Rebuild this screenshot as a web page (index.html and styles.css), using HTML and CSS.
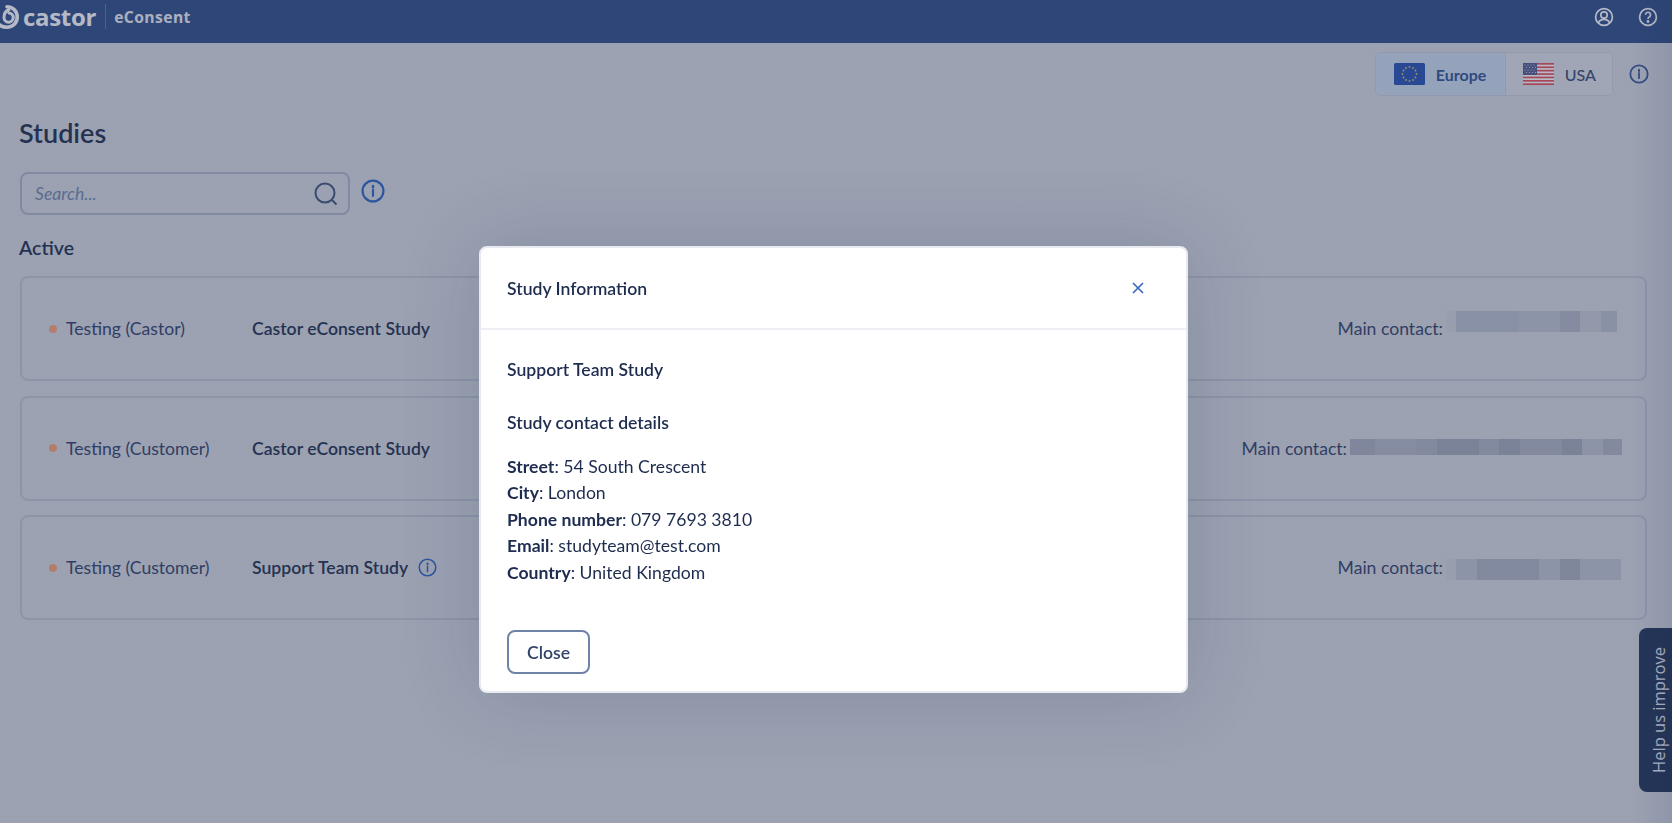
FILE: index.html
```html
<!DOCTYPE html>
<html lang="en">
<head>
    <meta charset="UTF-8">
    <title>Studies - Castor eConsent</title>
    <link rel="stylesheet" href="styles.css">
</head>
<body>
    <header class="topbar">
        <div class="brand">
            <svg class="brand-mark" viewBox="0 0 24 24" width="24" height="24" fill="none" stroke="currentColor" stroke-width="3.600" stroke-linecap="round">
                <path d="M12 1.800C18 1.800 22.200 6.500 22.200 12C22.200 18 18 22.200 12 22.200C8 22.200 4 20.500 2 17"/>
                <path d="M14 4.500C10.500 6 9 9.500 9 12.500A4.600 4.600 0 1 0 14 8" stroke-width="3"/>
            </svg>
            <span class="brand-name">castor</span>
            <span class="brand-line"></span>
            <span class="brand-product">eConsent</span>
        </div>
        <div class="topbar-icons">
            <svg viewBox="0 0 20 20" width="20" height="20" fill="none" stroke="currentColor" stroke-width="1.700">
                <circle cx="10" cy="10" r="8.400"/>
                <circle cx="10" cy="8" r="3.200"/>
                <path d="M4.600 15.600c1-2.400 3-3.200 5.400-3.200s4.400.8 5.400 3.200"/>
            </svg>
            <svg viewBox="0 0 20 20" width="20" height="20" fill="none" stroke="currentColor" stroke-width="1.700">
                <circle cx="10" cy="10" r="8.400"/>
                <path d="M7.500 7.800a2.500 2.500 0 1 1 3.800 2.100c-.9.600-1.300 1-1.300 2"/>
                <circle cx="10" cy="14.500" r=".6" fill="currentColor"/>
            </svg>
        </div>
    </header>

    <main class="content">
        <div class="region-row">
            <div class="region-switch">
                <div class="region region-active">
                    <svg class="flag" viewBox="0 0 31 22" width="31" height="22">
                        <rect width="31" height="22" rx="1.500" fill="#395eb8"/>
                        <g fill="#d3cb64">
                            <circle cx="15.500" cy="4" r=".9"/>
                            <circle cx="19" cy="5" r=".9"/>
                            <circle cx="21.500" cy="7.500" r=".9"/>
                            <circle cx="22.500" cy="11" r=".9"/>
                            <circle cx="21.500" cy="14.500" r=".9"/>
                            <circle cx="19" cy="17" r=".9"/>
                            <circle cx="15.500" cy="18" r=".9"/>
                            <circle cx="12" cy="17" r=".9"/>
                            <circle cx="9.500" cy="14.500" r=".9"/>
                            <circle cx="8.500" cy="11" r=".9"/>
                            <circle cx="9.500" cy="7.500" r=".9"/>
                            <circle cx="12" cy="5" r=".9"/>
                        </g>
                    </svg>
                    <span>Europe</span>
                </div>
                <div class="region region-other">
                    <svg class="flag" viewBox="0 0 31 22" width="31" height="22">
                        <rect width="31" height="22" rx="1.500" fill="#fff"/>
                        <g fill="#f05964">
                            <rect width="31" height="1.700"/>
                            <rect y="3.400" width="31" height="1.700"/>
                            <rect y="6.800" width="31" height="1.700"/>
                            <rect y="10.200" width="31" height="1.700"/>
                            <rect y="13.600" width="31" height="1.700"/>
                            <rect y="17" width="31" height="1.700"/>
                            <rect y="20.300" width="31" height="1.700"/>
                        </g>
                        <rect width="14" height="11.900" fill="#616796"/>
                        <g fill="#e6e8f0">
                            <circle cx="2" cy="2" r=".6"/><circle cx="5" cy="2" r=".6"/><circle cx="8" cy="2" r=".6"/><circle cx="11" cy="2" r=".6"/>
                            <circle cx="3.500" cy="4.500" r=".6"/><circle cx="6.500" cy="4.500" r=".6"/><circle cx="9.500" cy="4.500" r=".6"/><circle cx="12.500" cy="4.500" r=".6"/>
                            <circle cx="2" cy="7" r=".6"/><circle cx="5" cy="7" r=".6"/><circle cx="8" cy="7" r=".6"/><circle cx="11" cy="7" r=".6"/>
                            <circle cx="3.500" cy="9.500" r=".6"/><circle cx="6.500" cy="9.500" r=".6"/><circle cx="9.500" cy="9.500" r=".6"/><circle cx="12.500" cy="9.500" r=".6"/>
                        </g>
                    </svg>
                    <span>USA</span>
                </div>
            </div>
            <svg class="info-icon region-info" viewBox="0 0 20 20" width="20" height="20">
                <circle cx="10" cy="10" r="8.700"/>
                <path d="M10 9v5.200"/>
                <path class="info-dot" d="M10 5.700v1.200"/>
            </svg>
        </div>

        <h1 class="page-title">Studies</h1>

        <div class="search-row">
            <div class="search-box">
                <span class="search-hint">Search...</span>
                <svg viewBox="0 0 24 24" width="24" height="24" fill="none" stroke="currentColor" stroke-width="2" class="search-icon">
                    <circle cx="11" cy="11" r="9.500"/>
                    <path d="M18 18l4.500 4.500"/>
                </svg>
            </div>
            <svg class="info-icon search-info" viewBox="0 0 20 20" width="24" height="24">
                <circle cx="10" cy="10" r="8.700"/>
                <path d="M10 9v5.200"/>
                <path class="info-dot" d="M10 5.700v1.200"/>
            </svg>
        </div>

        <h2 class="section-title">Active</h2>

        <div class="study-list">
            <div class="study-card">
                <span class="status-dot"></span>
                <span class="study-env">Testing (Castor)</span>
                <span class="study-name">Castor eConsent Study</span>
                <span class="study-contact">Main contact:</span>
                <span class="blur blur-one"></span>
            </div>
            <div class="study-card">
                <span class="status-dot"></span>
                <span class="study-env">Testing (Customer)</span>
                <span class="study-name">Castor eConsent Study</span>
                <span class="study-contact">Main contact:</span>
                <span class="blur blur-two"></span>
            </div>
            <div class="study-card">
                <span class="status-dot"></span>
                <span class="study-env">Testing (Customer)</span>
                <span class="study-name">Support Team Study</span>
                <svg class="info-icon card-info" viewBox="0 0 20 20" width="19" height="19">
                    <circle cx="10" cy="10" r="8.700"/>
                    <path d="M10 9v5.200"/>
                    <path class="info-dot" d="M10 5.700v1.200"/>
                </svg>
                <span class="study-contact">Main contact:</span>
                <span class="blur blur-three"></span>
            </div>
        </div>
    </main>

    <div class="help-tab"><span>Help us improve</span></div>

    <!-- Modal -->
    <div class="overlay">
        <div class="modal">
            <div class="modal-header">
                <h3>Study Information</h3>
                <svg class="modal-close" viewBox="0 0 14 14" width="14" height="14" fill="none" stroke="currentColor" stroke-width="1.700">
                    <path d="M2 2l10 10M12 2L2 12"/>
                </svg>
            </div>
            <div class="modal-body">
                <h4 class="modal-study">Support Team Study</h4>
                <h4 class="modal-sub">Study contact details</h4>
                <p class="modal-details">
                    <b>Street</b>: 54 South Crescent<br>
                    <b>City</b>: London<br>
                    <b>Phone number</b>: 079 7693 3810<br>
                    <b>Email</b>: studyteam@test.com<br>
                    <b>Country</b>: United Kingdom
                </p>
                <button class="btn-close">Close</button>
            </div>
        </div>
    </div>
</body>
</html>
```

FILE: styles.css
```css
* {
    margin: 0;
    padding: 0;
    box-sizing: border-box;
}

body {
    font-family: 'Lato', 'Liberation Sans', sans-serif;
    background-color: #dcdde3;
    color: #323d59;
    height: 823px;
    overflow: hidden;
}

/* Topo */
.topbar {
    height: 43px;
    background-color: #405a90;
    color: #fff;
    display: flex;
    align-items: center;
    justify-content: space-between;
    padding: 0 14px 10px 0;
}

.brand {
    display: flex;
    align-items: center;
    margin-left: -5px;
}

.brand-name {
    font-family: 'Open Sans', sans-serif;
    font-weight: 700;
    font-size: 24px;
    line-height: 30px;
    margin-left: 4px;
    letter-spacing: -.3px;
}

.brand-line {
    width: 1px;
    height: 25px;
    margin: 0 8px 0 9px;
    background-color: #6183c8;
}

.brand-product {
    font-family: 'Open Sans', sans-serif;
    font-weight: 700;
    font-size: 15.700px;
    letter-spacing: .4px;
    color: #f0f1f5;
}

.topbar-icons {
    display: flex;
    align-items: center;
    gap: 24px;
}

/* Conteudo */
.content {
    padding: 9px 25px 0 20px;
}

.region-row {
    display: flex;
    justify-content: flex-end;
    align-items: center;
    height: 44px;
    gap: 16px;
    margin-right: -2px;
}

.region-switch {
    display: flex;
    height: 44px;
    border: 1px solid #ced2dc;
    border-radius: 5px;
    overflow: hidden;
}

.region {
    display: flex;
    align-items: center;
    gap: 11px;
    padding: 0 16px 0 18px;
    font-size: 16px;
    font-weight: 500;
    color: #47567c;
}

.region-active {
    width: 129px;
    background-color: #d2dfef;
    color: #43609c;
    font-weight: 700;
}

.region-other {
    background-color: #e2e3e8;
    border-left: 1px solid #ced2dc;
    padding-left: 17px;
}

.info-icon {
    fill: none;
    stroke: #3b70c8;
    stroke-width: 1.600;
    stroke-linecap: round;
    flex-shrink: 0;
}

.info-dot {
    stroke-width: 2;
}

.region-info {
    stroke: #47639c;
    stroke-width: 1.800;
}

.page-title {
    font-size: 27px;
    font-weight: 600;
    line-height: 34px;
    margin: 20px 0 0 -1px;
}

.search-row {
    display: flex;
    align-items: center;
    gap: 11px;
    margin-top: 22px;
}

.search-box {
    width: 330px;
    height: 43px;
    border: 2px solid #b4bccd;
    border-radius: 8px;
    display: flex;
    align-items: center;
    justify-content: space-between;
    padding: 0 10px 0 13px;
}

.search-hint {
    font-style: italic;
    font-size: 17.600px;
    color: #7e8fb4;
}

.search-icon {
    color: #506186;
}

.search-info {
    margin-top: -5px;
    stroke-width: 1.800;
}

.section-title {
    font-size: 19.500px;
    font-weight: 600;
    line-height: 24px;
    margin: 21px 0 0 -1px;
}

.study-list {
    display: flex;
    flex-direction: column;
    gap: 14.500px;
    margin-top: 16px;
}

.study-card {
    height: 105px;
    border: 2px solid #c6cad6;
    border-radius: 8px;
    display: flex;
    align-items: center;
    padding: 0 23px 0 27px;
}

.status-dot {
    width: 8px;
    height: 8px;
    border-radius: 50%;
    background-color: #fdaa81;
    margin-right: 9px;
}

.study-env {
    width: 186px;
    font-size: 17.600px;
    color: #434f73;
}

.study-name {
    font-size: 17.600px;
    font-weight: 600;
}

.card-info {
    margin-left: 10px;
}

.study-contact {
    margin-left: auto;
    font-size: 17.600px;
    color: #434f73;
}

.blur {
    margin-left: 3px;
}

.blur-one {
    width: 171px;
    height: 21px;
    margin-right: 5px;
    margin-bottom: 15px;
    background: linear-gradient(to right, #d6d9df 0 10px, #c1c4d1 10px 72px, #c6c9d5 72px 114px, #babdca 114px 134px, #ced0d8 134px 155px, #c1c4d1 155px 100%);
}

.blur-two {
    width: 272px;
    height: 16px;
    margin-bottom: 2px;
    background: linear-gradient(to right, #b4b7c5 0 25px, #bcbfcc 25px 66px, #b8bbc9 66px 87px, #acb0bf 87px 129px, #b8bbc9 129px 149px, #acb0bf 149px 170px, #b8bbc9 170px 212px, #acb0bf 212px 232px, #c6c9d5 232px 253px, #b8bbc9 253px 100%);
}

.blur-three {
    width: 175px;
    height: 21px;
    margin-right: 1px;
    margin-top: 4px;
    background: linear-gradient(to right, #d6d9df 0 10px, #c6c9d5 10px 31px, #b8bbc9 31px 93px, #c6c9d5 93px 114px, #b4b7c5 114px 134px, #c6c9d5 134px 100%);
}

/* Aba lateral */
.help-tab {
    position: fixed;
    top: 628px;
    right: 0;
    width: 33px;
    height: 164px;
    padding-left: 6px;
    background-color: #324263;
    border-radius: 8px 0 0 8px;
    color: #f0f2f6;
    display: flex;
    align-items: center;
    justify-content: center;
}

.help-tab span {
    writing-mode: vertical-rl;
    transform: rotate(180deg);
    font-family: 'Open Sans', sans-serif;
    font-size: 16.500px;
    white-space: nowrap;
}

/* Modal */
.overlay {
    position: fixed;
    inset: 0;
    background: linear-gradient(to left, rgba(8, 25, 65, .36), rgba(8, 25, 65, .3) 40px);
}

.modal {
    position: absolute;
    top: 246px;
    left: 479px;
    width: 709px;
    height: 447px;
    background-color: #fff;
    border: 2px solid #e8eaf2;
    border-radius: 8px;
    box-shadow: 0 0 80px rgba(8, 25, 65, .16);
    color: #1e2c4f;
}

.modal-header {
    height: 82px;
    border-bottom: 2px solid #eeeef4;
    display: flex;
    align-items: center;
    justify-content: space-between;
    padding: 0 41px 0 26px;
}

.modal-header h3 {
    font-size: 17.600px;
    font-weight: 600;
}

.modal-close {
    color: #3a6ac0;
}

.modal-body {
    padding: 28px 26px 0;
    font-size: 17.600px;
}

.modal-study,
.modal-sub {
    font-size: 17.600px;
    font-weight: 600;
    line-height: 24px;
}

.modal-sub {
    margin-top: 29px;
}

.modal-details {
    margin-top: 19px;
    line-height: 26.400px;
}

.modal-details b {
    font-weight: 700;
}

.btn-close {
    display: block;
    margin-top: 44px;
    width: 83px;
    height: 44px;
    background-color: #fff;
    border: 2px solid #6f82a8;
    border-radius: 8px;
    font-family: inherit;
    font-size: 17.600px;
    font-weight: 600;
    color: #33436b;
}
```
